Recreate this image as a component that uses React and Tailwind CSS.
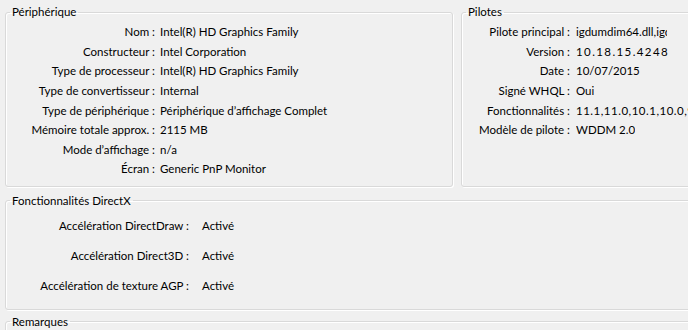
import React from 'react';

const peripherique = [
  ['Nom', 'Intel(R) HD Graphics Family'],
  ['Constructeur', 'Intel Corporation'],
  ['Type de processeur', 'Intel(R) HD Graphics Family'],
  ['Type de convertisseur', 'Internal'],
  ['Type de périphérique', 'Périphérique d’affichage Complet'],
  ['Mémoire totale approx.', '2115 MB'],
  ['Mode d’affichage', 'n/a'],
  ['Écran', 'Generic PnP Monitor'],
];

const pilotes = [
  ['Pilote principal', 'igdumdim64.dll,igdumd64.dll,igd10iumd64.dll', ''],
  ['Version', '10.18.15.4248', 'tracking-[1.4px]'],
  ['Date', '10/07/2015', ''],
  ['Signé WHQL', 'Oui', ''],
  ['Fonctionnalités', '11.1,11.0,10.1,10.0,9.3', 'tracking-[0.5px]'],
  ['Modèle de pilote', 'WDDM 2.0', ''],
];

const directx = [
  ['Accélération DirectDraw', 'Activé'],
  ['Accélération Direct3D', 'Activé'],
  ['Accélération de texture AGP', 'Activé'],
];

const Group = ({ title, className = '', children }) => (
  <fieldset
    className={`border border-[#d9d9d9] rounded-[3px] shadow-[inset_1px_1px_0_#ffffff,1px_1px_0_#ffffff] ${className}`}
  >
    <legend className="ml-[4px] px-[2px] leading-[16px]">{title}</legend>
    {children}
  </fieldset>
);

const App = () => {
  return (
    <div
      className="w-[688px] h-[330px] overflow-hidden bg-[#f0f0f0] text-[11.5px] text-black"
      style={{ fontFamily: 'Lato, "Noto Sans", sans-serif' }}
    >
      <div className="flex gap-[8px] pt-[4px] pl-[5px]">
        {/* Périphérique */}
        <Group title="Périphérique" className="w-[448px] shrink-0 pt-[2px] pb-[7px]">
          {peripherique.map(([label, value]) => (
            <div key={label} className="flex items-center h-[19.6px] whitespace-nowrap">
              <span className="w-[149px] text-right">{label} :</span>
              <span className="ml-[5px]">{value}</span>
            </div>
          ))}
        </Group>

        {/* Pilotes */}
        <Group title="Pilotes" className="w-[226px] shrink-0 pt-[2px]">
          {pilotes.map(([label, value, extra]) => (
            <div key={label} className="flex items-center h-[19.6px] whitespace-nowrap">
              <span className="w-[108px] shrink-0 text-right">{label} :</span>
              <span
                className={`ml-[6px] overflow-hidden ${label === 'Pilote principal' ? 'w-[91px]' : ''} ${extra}`}
              >
                {value}
              </span>
            </div>
          ))}
        </Group>
      </div>

      {/* Fonctionnalités DirectX */}
      <div className="pl-[5px] mt-[6px]">
        <Group title="Fonctionnalités DirectX" className="w-[700px] pt-[2px] pb-[8px]">
          {directx.map(([label, value]) => (
            <div key={label} className="flex items-center h-[30px] whitespace-nowrap">
              <span className="w-[183px] text-right">{label} :</span>
              <span className="ml-[13px]">{value}</span>
            </div>
          ))}
        </Group>
      </div>

      {/* Remarques */}
      <div className="pl-[5px] mt-[4px]">
        <Group title="Remarques" className="w-[700px] h-[60px]" />
      </div>
    </div>
  );
};

export default App;
